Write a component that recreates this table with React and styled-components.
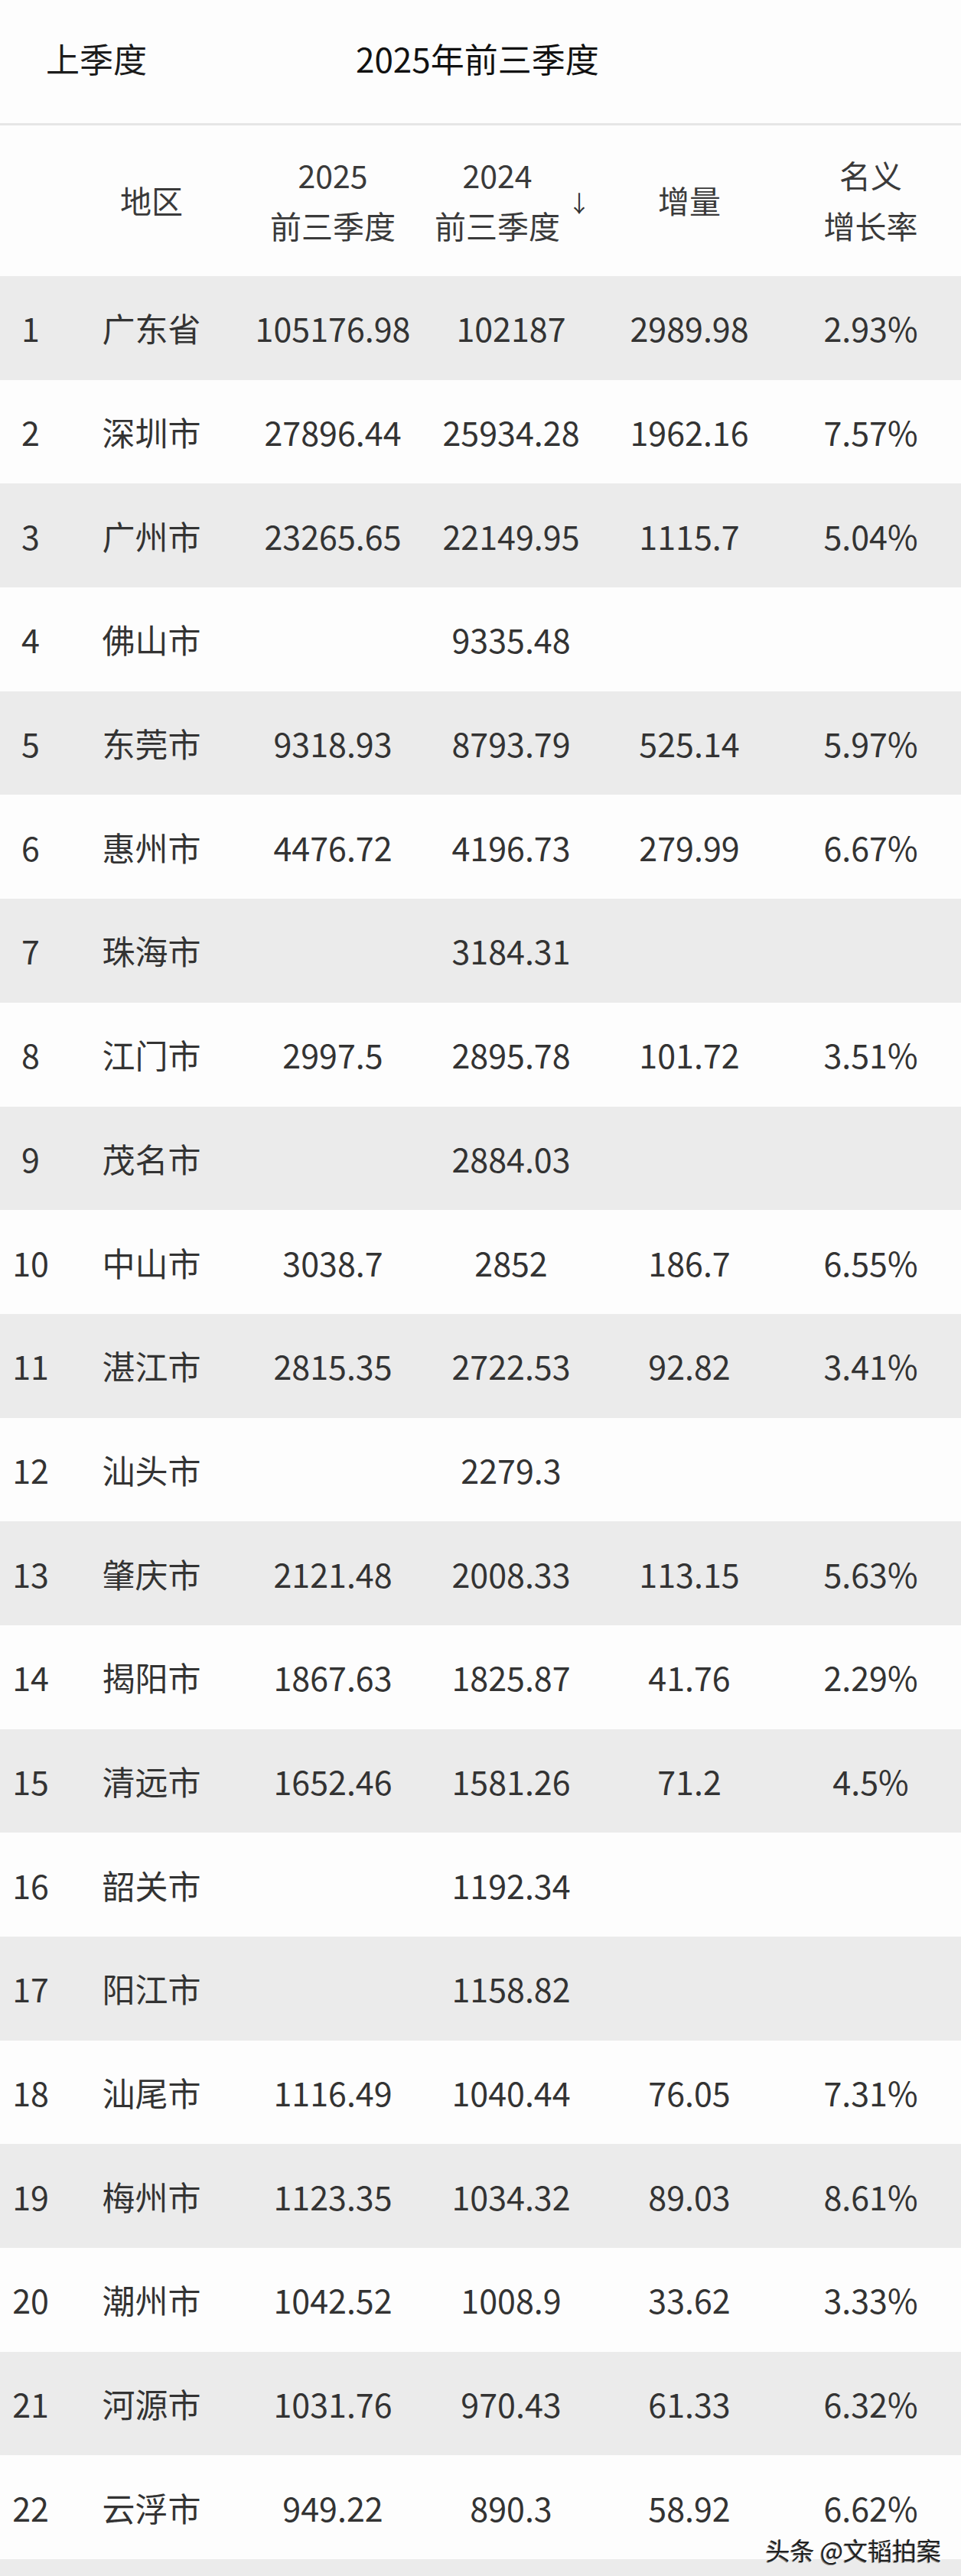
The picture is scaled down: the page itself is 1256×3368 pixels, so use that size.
import React from "react";
import styled, { createGlobalStyle } from "styled-components";

const GlobalStyle = createGlobalStyle`
  html, body {
    margin: 0;
    padding: 0;
    background: #fdfdfd;
  }
  body {
    font-family: "Noto Sans CJK SC", "Noto Sans", sans-serif;
    color: #333;
  }
`;

const Page = styled.div`
  width: 1256px;
  background: #fdfdfd;
  position: relative;
`;

const TabBar = styled.div`
  height: 161px;
  display: flex;
  align-items: center;
  padding-left: 60px;
  border-bottom: 3px solid #e6e6e6;
  box-sizing: content-box;
`;

const Tab = styled.div`
  font-size: 44px;
  line-height: 1;
  color: ${props => (props.active ? "#111" : "#1c1c1c")};
  margin-right: ${props => (props.active ? "0" : "273px")};
  padding-bottom: 10px;
`;

const cols = "80px 236px 238px 228px 238px 236px";

const HeadRow = styled.div`
  display: grid;
  grid-template-columns: ${cols};
  height: 197px;
  background: #fdfdfd;
`;

const HeadCell = styled.div`
  display: flex;
  align-items: center;
  justify-content: center;
  gap: 10px;
  font-size: 41px;
  line-height: 66px;
  color: #3a3a3a;
  text-align: center;
  padding-bottom: 4px;
  padding-left: ${props => (props.sorted ? "4px" : "0")};
`;

const HeadText = styled.div`
  display: flex;
  flex-direction: column;
  align-items: center;
  white-space: nowrap;
`;

const SortArrow = styled.span`
  font-size: 30px;
  line-height: 1;
  color: #333;
  padding-top: 6px;
`;

const Row = styled.div`
  display: grid;
  grid-template-columns: ${cols};
  height: 135.7px;
  background: ${props => (props.striped ? "#ebebeb" : "#fdfdfd")};
`;

const Cell = styled.div`
  display: flex;
  align-items: center;
  justify-content: center;
  font-size: 43px;
  line-height: 1;
  color: #333;
  white-space: nowrap;
`;

const Watermark = styled.div`
  position: absolute;
  right: 26px;
  top: 3317px;
  font-size: 32px;
  line-height: 1;
  color: #222;
  text-shadow: 1.5px -1px 0 #fff, -1px 1px 0 #888;
`;

const rows = [
  ["广东省", "105176.98", "102187", "2989.98", "2.93%"],
  ["深圳市", "27896.44", "25934.28", "1962.16", "7.57%"],
  ["广州市", "23265.65", "22149.95", "1115.7", "5.04%"],
  ["佛山市", "", "9335.48", "", ""],
  ["东莞市", "9318.93", "8793.79", "525.14", "5.97%"],
  ["惠州市", "4476.72", "4196.73", "279.99", "6.67%"],
  ["珠海市", "", "3184.31", "", ""],
  ["江门市", "2997.5", "2895.78", "101.72", "3.51%"],
  ["茂名市", "", "2884.03", "", ""],
  ["中山市", "3038.7", "2852", "186.7", "6.55%"],
  ["湛江市", "2815.35", "2722.53", "92.82", "3.41%"],
  ["汕头市", "", "2279.3", "", ""],
  ["肇庆市", "2121.48", "2008.33", "113.15", "5.63%"],
  ["揭阳市", "1867.63", "1825.87", "41.76", "2.29%"],
  ["清远市", "1652.46", "1581.26", "71.2", "4.5%"],
  ["韶关市", "", "1192.34", "", ""],
  ["阳江市", "", "1158.82", "", ""],
  ["汕尾市", "1116.49", "1040.44", "76.05", "7.31%"],
  ["梅州市", "1123.35", "1034.32", "89.03", "8.61%"],
  ["潮州市", "1042.52", "1008.9", "33.62", "3.33%"],
  ["河源市", "1031.76", "970.43", "61.33", "6.32%"],
  ["云浮市", "949.22", "890.3", "58.92", "6.62%"],
  ["", "", "", "", ""]
];

export default function App() {
  return (
    <Page>
      <GlobalStyle />
      <TabBar>
        <Tab>上季度</Tab>
        <Tab active>2025年前三季度</Tab>
      </TabBar>
      <HeadRow>
        <HeadCell />
        <HeadCell>
          <HeadText>地区</HeadText>
        </HeadCell>
        <HeadCell>
          <HeadText>
            <span>2025</span>
            <span>前三季度</span>
          </HeadText>
        </HeadCell>
        <HeadCell sorted>
          <HeadText>
            <span>2024</span>
            <span>前三季度</span>
          </HeadText>
          <SortArrow>↓</SortArrow>
        </HeadCell>
        <HeadCell>
          <HeadText>增量</HeadText>
        </HeadCell>
        <HeadCell>
          <HeadText>
            <span>名义</span>
            <span>增长率</span>
          </HeadText>
        </HeadCell>
      </HeadRow>
      {rows.map((r, i) => (
        <Row key={i} striped={i % 2 === 0}>
          <Cell>{r[0] ? i + 1 : ""}</Cell>
          {r.map((v, j) => (
            <Cell key={j}>{v}</Cell>
          ))}
        </Row>
      ))}
      <Watermark>头条 @文韬拍案</Watermark>
    </Page>
  );
}
